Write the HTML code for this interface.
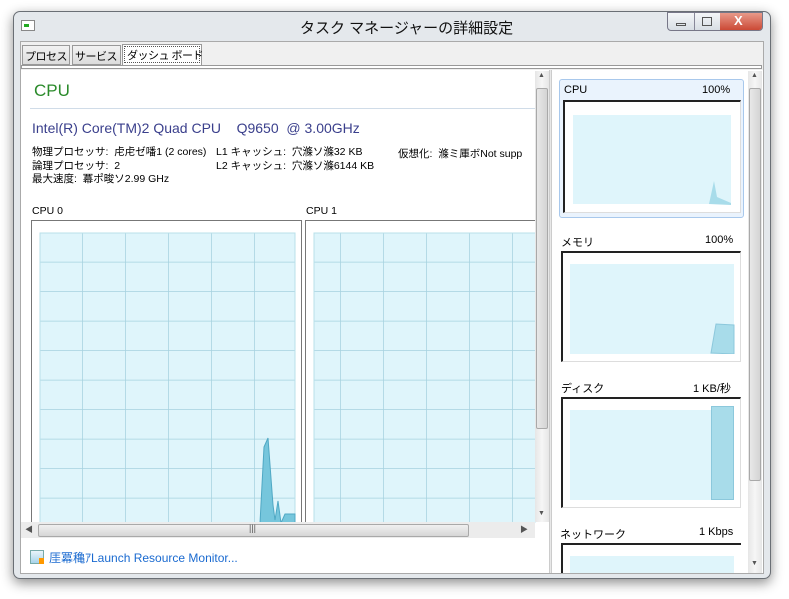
<!DOCTYPE html>
<html><head><meta charset="utf-8"><style>
*{margin:0;padding:0;box-sizing:border-box}
body{width:789px;height:599px;background:#fff;position:relative;overflow:hidden;font-family:"Liberation Sans","Noto Sans CJK JP",sans-serif;font-size:10.5px;color:#000}
.a{position:absolute}
.win{left:13px;top:11px;width:758px;height:568px;background:#e4e8ec;border:1px solid #6a6f75;border-radius:7px;box-shadow:0 4px 12px rgba(0,0,0,.45)}
.t{white-space:nowrap}
.sb{background:linear-gradient(90deg,#e6e6e6,#f6f6f6,#e6e6e6)}
.thumb{background:linear-gradient(90deg,#e8e8e8,#d4d4d4);border:1px solid #a9a9a9;border-radius:2px}
.tab{font-size:11px;letter-spacing:-0.5px}
</style></head><body>
<div class="a win"></div>
<div class="a" style="left:21px;top:20px;width:14px;height:11px;border:1px solid #888;background:#fff"></div>
<div class="a" style="left:24px;top:24px;width:5px;height:3px;background:#2a2"></div>
<div class="a t" style="left:300px;top:17px;font-size:15px;color:#111">タスク マネージャーの詳細設定</div>
<div class="a" style="left:667px;top:12px;width:96px;height:19px;border:1px solid #778;border-radius:0 0 4px 4px;background:linear-gradient(#f4f6f8,#d8dee4);overflow:hidden">
<div class="a" style="left:26px;top:0;width:1px;height:19px;background:#889"></div>
<div class="a" style="left:52px;top:0;width:43px;height:19px;background:linear-gradient(#e89a8a,#c8402c)"></div>
<div class="a" style="left:8px;top:10px;width:10px;height:3px;border:1px solid #555"></div>
<div class="a" style="left:34px;top:4px;width:10px;height:9px;border:1px solid #555"></div>
<div class="a t" style="left:66px;top:0px;color:#fff;font-weight:bold;font-size:13px">X</div>
</div>
<!-- content area -->
<div class="a" style="left:20px;top:41px;width:744px;height:533px;background:#f0f0f0;border:1px solid #aaa"></div>
<div class="a" style="left:22px;top:45px;width:48px;height:20px;background:linear-gradient(#f2f2f2,#dcdcdc);border:1px solid #999"></div>
<div class="a t tab" style="left:25px;top:48px">プロセス</div>
<div class="a" style="left:72px;top:45px;width:49px;height:20px;background:linear-gradient(#f2f2f2,#dcdcdc);border:1px solid #999"></div>
<div class="a t tab" style="left:75px;top:48px">サービス</div>
<div class="a" style="left:122px;top:44px;width:80px;height:22px;background:#fff;border:1px solid #999;border-bottom:none"></div>
<div class="a" style="left:124px;top:46px;width:76px;height:17px;border:1px dotted #555"></div>
<div class="a t tab" style="left:127px;top:47px">ダッシュ ボード</div>
<div class="a" style="left:21px;top:65px;width:741px;height:4px;border:1px solid #999;background:#fff"></div>
<!-- left panel -->
<div class="a" style="left:21px;top:70px;width:528px;height:503px;background:#fff"></div>
<div class="a t" style="left:34px;top:81px;font-size:17px;color:#2a8a2a">CPU</div>
<div class="a" style="left:30px;top:108px;width:505px;height:1px;background:#d0dce8"></div>
<div class="a t" style="left:32px;top:120px;font-size:14px;color:#3a3f8c">Intel(R) Core(TM)2 Quad CPU &nbsp;&nbsp;&nbsp;Q9650 &nbsp;@ 3.00GHz</div>
<div class="a t" style="left:32px;top:146px;line-height:13.5px">物理プロセッサ: &nbsp;虍虍ゼ噃1 (2 cores)<br>論理プロセッサ: &nbsp;2<br>最大速度: &nbsp;冪ポ晙ソ2.99 GHz</div>
<div class="a t" style="left:216px;top:146px;line-height:13.5px">L1 キャッシュ: &nbsp;穴滌ソ滌32 KB<br>L2 キャッシュ: &nbsp;穴滌ソ滌6144 KB</div>
<div class="a t" style="left:398px;top:146px;width:137px;overflow:hidden">仮想化: &nbsp;滌ミ厙ボNot supp</div>
<div class="a t" style="left:32px;top:205px">CPU 0</div>
<div class="a t" style="left:306px;top:205px">CPU 1</div>
<svg class="a" style="left:21px;top:215px" width="515" height="308">
<defs><pattern id="g" x="19" y="18" width="43" height="29.5" patternUnits="userSpaceOnUse"><rect width="43" height="29.5" fill="#dff5fb"/><path d="M43 0V29.5M0 29.5H43" stroke="#a6d2df" stroke-width="1.5" fill="none"/></pattern></defs>
<rect x="10.5" y="5.5" width="270" height="310" fill="#fff" stroke="#777"/>
<rect x="19" y="18" width="255" height="300" fill="url(#g)" stroke="#b8e0ea"/>
<rect x="284.5" y="5.5" width="240" height="310" fill="#fff" stroke="#777"/>
<rect x="293" y="18" width="230" height="300" fill="url(#g)" stroke="#b8e0ea"/>
<path d="M239 308L243 232L247 223L252 290L254 305L257 286L260 308L264 299L267 299L274 299L274 308Z" fill="#76c6dc" stroke="#4fa8c4"/>
</svg>
<div class="a sb" style="left:535px;top:71px;width:14px;height:451px"></div>
<div class="a t" style="left:538px;top:72px;font-size:7px;color:#555">▲</div>
<div class="a thumb" style="left:536px;top:88px;width:12px;height:341px"></div>
<div class="a t" style="left:538px;top:510px;font-size:7px;color:#555">▼</div>
<div class="a" style="left:21px;top:522px;width:514px;height:16px;background:#ececec"></div>
<div class="a thumb" style="left:38px;top:524px;width:431px;height:13px;background:linear-gradient(#f0f0f0,#d6d6d6)"></div>
<div class="a t" style="left:25px;top:524px;font-size:8px;color:#555">◀</div>
<div class="a t" style="left:520px;top:524px;font-size:8px;color:#555">▶</div>
<div class="a t" style="left:249px;top:523px;font-size:9px;color:#555">|||</div>
<div class="a" style="left:30px;top:550px;width:14px;height:14px;background:linear-gradient(#eaf4fa,#a8d4ea);border:1px solid #7aa"></div>
<div class="a" style="left:39px;top:558px;width:5px;height:6px;background:#f90"></div>
<div class="a t" style="left:49px;top:549px;font-size:12px;color:#1a6ad0">厓冪穐ｱLaunch Resource Monitor...</div>
<div class="a" style="left:549px;top:70px;width:3px;height:503px;background:#e8e8e8;border-left:1px solid #ccc;border-right:1px solid #ccc"></div>
<div class="a" style="left:552px;top:70px;width:211px;height:503px;background:#fff;overflow:hidden">
<div class="a" style="left:7px;top:9px;width:185px;height:139px;background:#eaf3fd;border:1px solid #a8c8ec;border-radius:3px"></div>
<div class="a t" style="left:12px;top:14px;font-size:11px">CPU</div><div class="a t" style="left:150px;top:14px;font-size:11px">100%</div>
<div class="a" style="left:11px;top:30px;width:178px;height:113px;background:#fff;border-top:2px solid #222;border-left:2px solid #222;border-right:1px solid #ddd;border-bottom:1px solid #ddd"></div>
<div class="a" style="left:21px;top:45px;width:158px;height:89px;background:#dff5fb"></div>
<svg class="a" style="left:148px;top:108px" width="32" height="27"><path d="M9 26L14 3L17 19L31 25L31 27Z" fill="#a8dcea"/></svg>
<div class="a t" style="left:9px;top:164px;font-size:11px">メモリ</div><div class="a t" style="left:153px;top:164px;font-size:11px">100%</div>
<div class="a" style="left:9px;top:181px;width:180px;height:111px;background:#fff;border-top:2px solid #222;border-left:2px solid #222;border-right:1px solid #ddd;border-bottom:1px solid #ddd"></div>
<div class="a" style="left:18px;top:194px;width:164px;height:90px;background:#dff5fb"></div>
<svg class="a" style="left:158px;top:252px" width="25" height="32"><path d="M1 31L6 2L24 3L24 32Z" fill="#a8dcea" stroke="#8cc8dc"/></svg>
<div class="a t" style="left:9px;top:310px;font-size:11px">ディスク</div><div class="a t" style="left:141px;top:310px;font-size:11px">1 KB/秒</div>
<div class="a" style="left:9px;top:327px;width:180px;height:111px;background:#fff;border-top:2px solid #222;border-left:2px solid #222;border-right:1px solid #ddd;border-bottom:1px solid #ddd"></div>
<div class="a" style="left:18px;top:340px;width:164px;height:90px;background:#dff5fb"></div>
<div class="a" style="left:159px;top:336px;width:23px;height:94px;background:#a8dcea;border:1px solid #8cc8dc"></div>
<div class="a t" style="left:8px;top:456px;font-size:11px">ネットワーク</div><div class="a t" style="left:147px;top:456px;font-size:11px">1 Kbps</div>
<div class="a" style="left:9px;top:473px;width:180px;height:40px;background:#fff;border-top:2px solid #222;border-left:2px solid #222"></div>
<div class="a" style="left:18px;top:486px;width:164px;height:17px;background:#dff5fb"></div>
</div>
<div class="a sb" style="left:748px;top:71px;width:14px;height:502px"></div>
<div class="a t" style="left:751px;top:72px;font-size:7px;color:#555">▲</div>
<div class="a thumb" style="left:749px;top:88px;width:12px;height:393px"></div>
<div class="a t" style="left:751px;top:560px;font-size:7px;color:#555">▼</div>
</body></html>
